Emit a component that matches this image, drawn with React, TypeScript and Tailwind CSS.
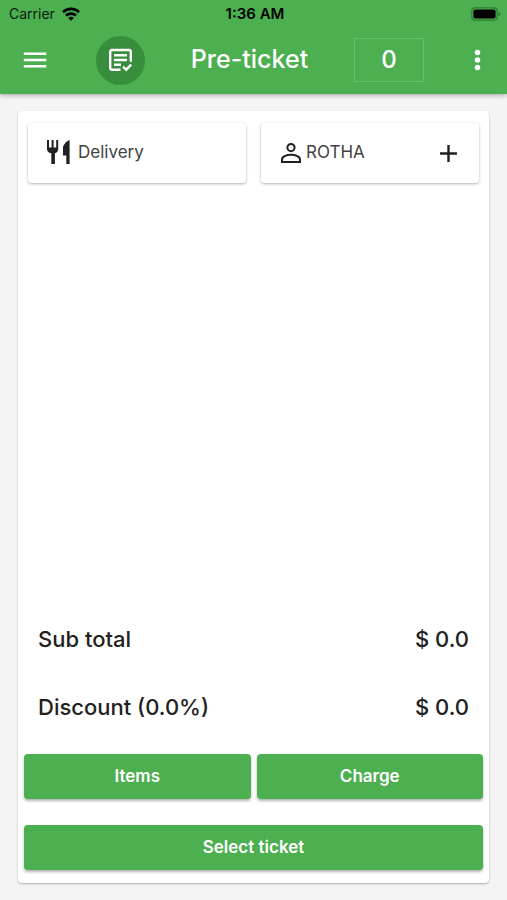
import { MdAdd, MdMenu } from "react-icons/md";

const totals = [
    { label: "Sub total", value: "$ 0.0" },
    { label: "Discount (0.0%)", value: "$ 0.0" },
]

const actionClass = "h-[45px] rounded bg-[#4caf50] text-white text-[17px] font-semibold shadow-[0_2px_3px_rgba(0,0,0,0.3)]"
const optionClass = "flex items-center h-[60px] rounded bg-white text-[17px] shadow-[0_1px_3px_rgba(0,0,0,0.3)]"

function StatusBar() {
    return (
        <div className="grid grid-cols-3 items-center h-[27px] pl-[9px] pr-[6px] text-sm text-[#0b1d0c]">
            <div className="flex items-center gap-[7px]">
                <span>Carrier</span>
                <svg viewBox="0 0 18 14" className="w-[18px] h-[14px]" fill="none" stroke="#000" strokeWidth="2.6">
                    <path d="M1 5.2a11.4 11.4 0 0 1 16 0" />
                    <path d="M4 8.6a7.2 7.2 0 0 1 10 0" />
                    <path d="M9 13.8 6.2 11a4 4 0 0 1 5.6 0z" fill="#000" stroke="none" />
                </svg>
            </div>
            <span className="text-center text-[15px] font-semibold text-black">1:36 AM</span>
            <svg viewBox="0 0 30 14" className="w-[30px] h-[14px] justify-self-end">
                <rect x="0.8" y="0.8" width="25.4" height="12.4" rx="3.5" fill="none" stroke="#2f7a33" strokeWidth="1.2" />
                <rect x="2.4" y="2.4" width="22.2" height="9.2" rx="2" fill="#000" />
                <path d="M27.6 4.8c2.4.9 2.4 3.5 0 4.4z" fill="#2f7a33" />
            </svg>
        </div>
    )
}

function TicketIcon() {
    return (
        <svg viewBox="0 0 24 24" className="w-6 h-6" fill="none" stroke="#fff" strokeWidth="2.4">
            <path d="M12.5 21.8H4A1.8 1.8 0 0 1 2.2 20V3.8A1.8 1.8 0 0 1 4 2h17a1.8 1.8 0 0 1 1.8 1.8v10" />
            <path d="M6 7.3h13M6 12h13M6 16.7h7" />
            <path d="m15 18.6 3.2 3.1 5-5.2" />
        </svg>
    )
}

function CutleryIcon() {
    return (
        <svg viewBox="0 0 24 28" className="w-6 h-7" fill="#212121">
            <path d="M1 1h2v7.600h2.600V1h2v7.600h2.600V1h2v9c0 2.200-1.400 3.700-3.300 4.200V25H5.300V14.200C2.400 13.700 1 12.200 1 10z" />
            <path d="M23.600 1v24H20.300v-8.500h-3.300V8.500C17 6.500 20.600 1.600 23.600 1z" />
        </svg>
    )
}

function PersonIcon() {
    return (
        <svg viewBox="0 0 22 22" className="w-[22px] h-[22px]" fill="none" stroke="#212121" strokeWidth="2">
            <circle cx="11" cy="5.600" r="3.600" />
            <path d="M2 20v-2.600c0-2.600 4.300-4.600 9-4.600s9 2 9 4.600V20z" />
        </svg>
    )
}

export default function App() {
    return (
        <div className="flex flex-col min-h-screen bg-[#f4f4f4] font-['Inter',sans-serif] text-[#212121]">
            <header className="h-[94px] bg-[#4caf50] shadow-[0_1px_5px_rgba(0,0,0,0.35)]">
                <StatusBar />
                <div className="flex items-center justify-between h-[66px] pl-5 pr-[22px] text-white">
                    <button aria-label="Menu">
                        <MdMenu size={30} />
                    </button>
                    <button aria-label="Tickets" className="flex items-center justify-center w-[49px] h-[49px] rounded-full bg-[#388e3c]">
                        <TicketIcon />
                    </button>
                    <h1 className="text-[25px] font-medium">Pre-ticket</h1>
                    <button className="w-[70px] h-11 border border-[#68bd6b] text-2xl font-medium">0</button>
                    <button aria-label="More options">
                        <svg viewBox="6 0 12 24" className="w-[15px] h-[30px]" fill="currentColor">
                            <circle cx="12" cy="6" r="2.2" />
                            <circle cx="12" cy="12" r="2.2" />
                            <circle cx="12" cy="18" r="2.2" />
                        </svg>
                    </button>
                </div>
            </header>

            <main className="flex flex-col grow mx-[18px] mt-[17px] mb-[17px] px-[6px] pt-3 pb-[13px] rounded bg-white shadow-[0_1px_2px_rgba(0,0,0,0.3)]">
                <div className="grid grid-cols-2 gap-[15px] px-1">
                    <button className={`${optionClass} gap-2 pl-[18px]`}>
                        <CutleryIcon />
                        <span className="text-[#424242]">Delivery</span>
                    </button>
                    <button className={`${optionClass} gap-1 pl-[19px] pr-4`}>
                        <PersonIcon />
                        <span className="grow text-left text-[#424242]">ROTHA</span>
                        <MdAdd size={29} />
                    </button>
                </div>

                <dl className="flex flex-col gap-9 mt-auto px-[14px] mb-[31px] text-[22px] leading-8 font-medium">
                    {
                        totals.map( row => (
                            <div key={row.label} className="flex justify-between">
                                <dt>{ row.label }</dt>
                                <dd>{ row.value }</dd>
                            </div>
                        ))
                    }
                </dl>

                <div className="grid grid-cols-2 gap-x-[6px] gap-y-[26px]">
                    <button className={actionClass}>Items</button>
                    <button className={actionClass}>Charge</button>
                    <button className={`${actionClass} col-span-2`}>Select ticket</button>
                </div>
            </main>
        </div>
    );
}
